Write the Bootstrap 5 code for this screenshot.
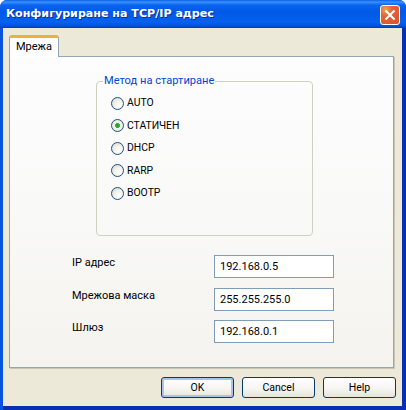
<!DOCTYPE html>
<html lang="bg">
<head>
<meta charset="utf-8">
<title>Конфигуриране на TCP/IP адрес</title>
<link href="https://cdn.jsdelivr.net/npm/bootstrap@5.3.0/dist/css/bootstrap.min.css" rel="stylesheet">
<style>
html,body{margin:0;height:410px;width:406px;overflow:hidden;background:#fff}
body{font-family:Roboto,"Liberation Sans",Arial,sans-serif;font-size:11px;color:#000}
.xp-window{width:406px;height:410px;background:#0831d9;border-radius:7px 7px 0 0;display:flex;flex-direction:column;overflow:hidden}
.xp-title{height:28px;flex:none;background:linear-gradient(180deg,#0a5ee8 0,#3a93ff 2px,#0a64ee 5px,#0058e6 12px,#0561ef 22px,#0053dd 26px,#0038b8 28px);display:flex;align-items:center;justify-content:space-between;padding:0 6px 0 6px}
.xp-title-text{font-family:"DejaVu Sans",sans-serif;font-weight:700;font-size:11.1px;color:#fff;text-shadow:1px 1px 0 #0a2f9e;white-space:nowrap}
.xp-close{width:20px;height:20px;padding:0;border:1px solid #fff;border-radius:3px;background:radial-gradient(circle at 25% 20%,#f0a24e 0,#e2613a 35%,#d8532a 100%);display:flex;align-items:center;justify-content:center;margin-top:2px}
.xp-frame{flex:1;display:flex;padding:0 4px 4px 3px;background:linear-gradient(90deg,#0855dd 0,#0855dd 3px,transparent 3px,transparent 402px,#0a2fb0 402px);background-color:#0a2fb0}
.xp-client{flex:1;background:#ece9d8;padding:7px 8px 0 6px;display:flex;flex-direction:column}
.xp-tab{width:50px;height:22px;flex:none;background:#fff;border:1px solid #91a7b4;border-bottom:0;border-top:3px solid #f5ac3f;border-radius:3px 3px 0 0;padding-left:6px;line-height:17px;position:relative;z-index:1;margin-bottom:-1px;font-size:11px}
.xp-pane{height:312px;flex:none;border:1px solid #91a7b4;box-shadow:1px 1px 0 #c9c6b5;background:linear-gradient(180deg,#fdfdfe 0,#f9f9f8 50%,#f4f3ee 100%);padding:17px 0 0 86px}
.xp-group{width:217px;height:162px;margin:0;border:1px solid #d0d0bf;border-radius:4px;padding:0 0 0 14px;min-width:0}
.xp-group legend{float:none;width:auto;font-size:11.1px;color:#0046d5;line-height:14px;margin:0 0 0 -8px;padding:0 1px}
.xp-radios{display:flex;flex-direction:column;padding-top:4px}
.xp-opt{height:22.5px;display:flex;align-items:center;gap:3px;margin:0;line-height:1;font-size:10.4px}
.xp-opt input{appearance:none;-webkit-appearance:none;width:13px;height:13px;margin:0;flex:none;border-radius:50%;border:1px solid #1c5180;background:radial-gradient(circle at 65% 65%,#fff 0,#f2f1ea 45%,#d6d3c5 100%)}
.xp-opt input:checked{background:radial-gradient(circle at 50% 50%,#22a322 0,#35b035 28%,#f4f4ee 36%,#e4e2d6 100%)}
.xp-fields{display:flex;flex-direction:column;gap:9.5px;margin:19px 0 0 -24px}
.xp-field{display:flex;height:23px}
.xp-field label{width:142px;flex:none;margin:0;font-size:11px;line-height:14px;padding-top:1px}
.xp-field input{width:120px;height:23px;border:1px solid #7f9db9;background:#fff;padding:0 5px;font:11px Roboto,"Liberation Sans",sans-serif;color:#000;border-radius:0;outline:0}
.xp-actions{display:flex;justify-content:flex-end;gap:8px;padding:9px 0 0;margin-right:-2px}
.xp-btn{width:73px;height:21px;padding:0;font-size:10.5px;line-height:18px;color:#000;border:1px solid #003c74;border-radius:3px;background:linear-gradient(180deg,#fff 0,#f5f4ef 60%,#e6e3d8 100%)}
.xp-btn.xp-default{box-shadow:inset 0 0 0 2px #a9c3ec}
</style>
</head>
<body>
<div class="xp-window">
  <div class="xp-title">
    <span class="xp-title-text">Конфигуриране на TCP/IP адрес</span>
    <button type="button" class="xp-close" aria-label="Close">
      <svg width="12" height="12" viewBox="0 0 12 12"><path d="M1.5 1.5 10.5 10.5M10.5 1.5 1.5 10.5" stroke="#fff" stroke-width="2" fill="none"/></svg>
    </button>
  </div>
  <div class="xp-frame">
    <div class="xp-client">
      <div class="xp-tab">Мрежа</div>
      <div class="xp-pane">
        <fieldset class="xp-group">
          <legend>Метод на стартиране</legend>
          <div class="xp-radios">
            <label class="xp-opt"><input type="radio" name="m">AUTO</label>
            <label class="xp-opt"><input type="radio" name="m" checked>СТАТИЧЕН</label>
            <label class="xp-opt"><input type="radio" name="m">DHCP</label>
            <label class="xp-opt"><input type="radio" name="m">RARP</label>
            <label class="xp-opt"><input type="radio" name="m">BOOTP</label>
          </div>
        </fieldset>
        <div class="xp-fields">
          <div class="xp-field"><label>IP адрес</label><input type="text" value="192.168.0.5"></div>
          <div class="xp-field"><label>Мрежова маска</label><input type="text" value="255.255.255.0"></div>
          <div class="xp-field"><label>Шлюз</label><input type="text" value="192.168.0.1"></div>
        </div>
      </div>
      <div class="xp-actions">
        <button type="button" class="xp-btn xp-default">OK</button>
        <button type="button" class="xp-btn">Cancel</button>
        <button type="button" class="xp-btn">Help</button>
      </div>
    </div>
  </div>
</div>
<script src="https://cdn.jsdelivr.net/npm/bootstrap@5.3.0/dist/js/bootstrap.bundle.min.js"></script>
</body>
</html>
